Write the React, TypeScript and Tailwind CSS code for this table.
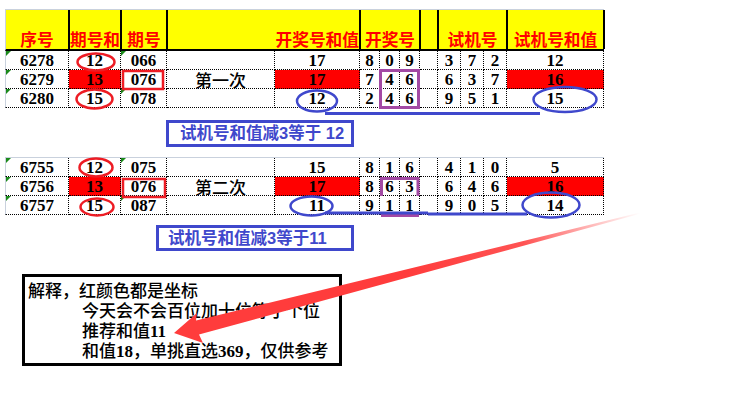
import React from 'react';

type Row = string[];

const t1: Row[] = [
  ['6278', '12', '066', '', '17', '8', '0', '9', '', '3', '7', '2', '12'],
  ['6279', '13', '076', '第一次', '17', '7', '4', '6', '', '6', '3', '7', '16'],
  ['6280', '15', '078', '', '12', '2', '4', '6', '', '9', '5', '1', '15'],
];

const t2: Row[] = [
  ['6755', '12', '075', '', '15', '8', '1', '6', '', '4', '1', '0', '5'],
  ['6756', '13', '076', '第二次', '17', '8', '6', '3', '', '6', '4', '6', '16'],
  ['6757', '15', '087', '', '11', '9', '1', '1', '', '9', '0', '5', '14'],
];

const redCols = [1, 4, 12];

function Green() {
  return (
    <span className="absolute left-0 top-0 h-0 w-0 border-t-[5px] border-r-[5px] border-t-[#1a8a1a] border-r-transparent" />
  );
}

function DataRows({ rows }: { rows: Row[] }) {
  return (
    <div className="grid grid-cols-[64px_52px_46px_108px_85px_20px_20px_20px_18px_23px_23px_23px_97px]">
      {rows.map((row, ri) =>
        row.map((v, ci) => {
          const red = ri === 1 && redCols.includes(ci);
          const green = ci === 0 || (ci === 2 && ri !== 1);
          const cjk = ci === 3;
          return (
            <div
              key={`${ri}-${ci}`}
              className={
                'relative flex h-[19px] items-center justify-center border-r border-b border-dotted border-black pt-[1px] text-[17px] leading-none text-black ' +
                (ci === 0 ? '[border-left-style:solid] border-l border-l-[#c9d1dd] ' : '') +
                (red ? 'bg-[#ff0000] ' : '') +
                (cjk ? "font-['Noto_Sans_CJK_SC',sans-serif] font-medium" : "font-['Liberation_Serif',serif] font-bold")
              }
            >
              {green && <Green />}
              {v}
            </div>
          );
        })
      )}
    </div>
  );
}

function Header() {
  const cells: { w: string; t: string; align?: string }[] = [
    { w: 'w-[64px]', t: '序号' },
    { w: 'w-[52px]', t: '期号和' },
    { w: 'w-[46px]', t: '期号' },
    { w: 'w-[193px]', t: '开奖号和值', align: 'justify-end' },
    { w: 'w-[60px]', t: '开奖号' },
    { w: 'w-[18px]', t: '' },
    { w: 'w-[69px]', t: '试机号' },
    { w: 'w-[97px]', t: '试机号和值' },
  ];
  return (
    <div className="flex h-[42px] w-[599px] border-t border-b-2 border-t-[#c9d1dd] border-b-black border-l border-l-[#c9d1dd] bg-[#ffff00]">
      {cells.map((c, i) => (
        <div
          key={i}
          className={`${c.w} flex shrink-0 items-end ${c.align ?? 'justify-center'} whitespace-nowrap border-r-2 border-black pb-[1px] font-['Noto_Sans_CJK_SC',sans-serif] text-[16.7px] font-bold leading-none text-[#ff0000]`}
        >
          {c.t}
        </div>
      ))}
    </div>
  );
}

function Annotations() {
  const red = '#ed1c24';
  const blue = '#3f48cc';
  const purple = '#a349a4';
  return (
    <svg className="pointer-events-none absolute left-0 top-0" width="743" height="399" viewBox="0 0 743 399">
      <defs>
        <linearGradient id="arr" x1="640" y1="213" x2="175" y2="333" gradientUnits="userSpaceOnUse">
          <stop offset="0" stopColor="#ff4848" stopOpacity="0" />
          <stop offset="0.25" stopColor="#ff4040" stopOpacity="0.9" />
          <stop offset="0.5" stopColor="#ff3c3c" stopOpacity="1" />
          <stop offset="1" stopColor="#ff3c3c" stopOpacity="1" />
        </linearGradient>
      </defs>
      {/* red ellipses */}
      <ellipse cx="96" cy="62" rx="18.5" ry="8.5" fill="none" stroke={red} strokeWidth="2.5" />
      <ellipse cx="94.5" cy="99" rx="18" ry="9.5" fill="none" stroke={red} strokeWidth="2.5" />
      <ellipse cx="96" cy="167.5" rx="16.5" ry="9" fill="none" stroke={red} strokeWidth="2.5" />
      <ellipse cx="97" cy="207" rx="16.5" ry="8.5" fill="none" stroke={red} strokeWidth="2.5" />
      {/* red rects */}
      <rect x="123" y="71" width="40" height="18" fill="none" stroke={red} strokeWidth="2.5" />
      <rect x="123" y="179" width="42" height="18" fill="none" stroke={red} strokeWidth="2.5" />
      {/* purple rects */}
      <rect x="380.5" y="70.5" width="38" height="37" fill="none" stroke={purple} strokeWidth="3" />
      <path d="M381.5 196 V178.5 H418 V196" fill="none" stroke={purple} strokeWidth="3" />
      <line x1="381" y1="215.5" x2="419" y2="215.5" stroke={purple} strokeWidth="3" />
      {/* blue lines */}
      <line x1="325" y1="113.5" x2="540" y2="113.5" stroke={blue} strokeWidth="3" />
      <line x1="325" y1="213" x2="428" y2="213" stroke={blue} strokeWidth="3" />
      <line x1="428" y1="214" x2="527" y2="214" stroke={blue} strokeWidth="3" />
      {/* blue ellipses */}
      <ellipse cx="317" cy="101" rx="20" ry="10.5" fill="none" stroke={blue} strokeWidth="2.5" />
      <ellipse cx="565" cy="99.5" rx="31.5" ry="12.5" fill="none" stroke={blue} strokeWidth="2.5" />
      <ellipse cx="311.5" cy="206" rx="21" ry="9.5" fill="none" stroke={blue} strokeWidth="2.5" />
      <ellipse cx="551" cy="205" rx="28.5" ry="12.5" fill="none" stroke={blue} strokeWidth="2.5" />
      {/* arrow */}
      <polygon
        points="174,333 197,313 196,320.5 640,212.6 640,213.8 199,334.5 203,343"
        fill="url(#arr)"
      />
    </svg>
  );
}

function Num({ children }: { children: React.ReactNode }) {
  return <span className="font-bold">{children}</span>;
}

export default function App() {
  return (
    <div className="relative h-[399px] w-[743px] overflow-hidden bg-white pt-[9px]">
      <div className="ml-[5px] w-[599px]">
        <Header />
        <DataRows rows={t1} />
      </div>

      <div className="ml-[166px] mt-[12px] flex h-[27px] w-[188px] items-center whitespace-nowrap border-[3px] border-[#3f48cc] pl-[11px] font-['Liberation_Sans','Noto_Sans_CJK_SC',sans-serif] text-[16.5px] font-bold leading-none text-[#3f48cc]">
        试机号和值减3等于 12
      </div>

      <div className="ml-[5px] mt-[10px] w-[599px] border-t border-[#c9d1dd]">
        <DataRows rows={t2} />
      </div>

      <div className="ml-[156px] mt-[10px] flex h-[26px] w-[198px] items-center whitespace-nowrap border-[3px] border-[#3f48cc] pl-[9px] font-['Liberation_Sans','Noto_Sans_CJK_SC',sans-serif] text-[16.5px] font-bold leading-none text-[#3f48cc]">
        试机号和值减3等于11
      </div>

      <div className="ml-[22px] mt-[23px] h-[92px] w-[320px] border-[3px] border-black pl-[3px] pt-[5px] font-['Liberation_Serif','Noto_Sans_CJK_SC',serif] text-[17px] font-medium leading-[20px] text-black">
        <div>解释，红颜色都是坐标</div>
        <div className="pl-[54px]">今天会不会百位加十位等于个位</div>
        <div className="pl-[54px]">
          推荐和值<Num>11</Num>
        </div>
        <div className="pl-[54px]">
          和值<Num>18</Num>，单挑直选<Num>369</Num>，仅供参考
        </div>
      </div>

      <Annotations />
    </div>
  );
}
